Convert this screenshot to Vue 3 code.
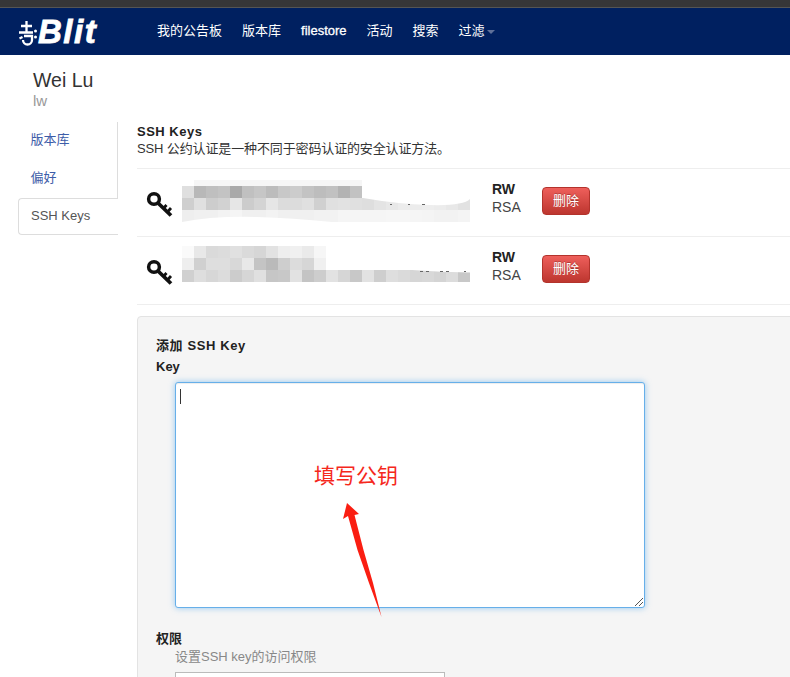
<script setup>
const links = [
  { t: '我的公告板' },
  { t: '版本库' },
  { t: 'filestore', latin: true },
  { t: '活动' },
  { t: '搜索' },
  { t: '过滤', caret: true }
]
const g = (v) => `rgb(${v},${v},${v})`
const keys = [
  {
    rows: [
      { h: 6, pad: 12, cells: [], strip: 168 },
      { h: 12, cells: [223,184,191,195,169,192,198,188,200,204,195,189,193,179,194] },
      { h: 12, cells: [207,224,205,210,230,204,212,230,220,220,224,208,224,226,224,222,228,232,236,236,238,236,232,226] },
      { h: 12, cells: [238,240,240,243,245,240,240,243,240,240,240,242,242,245,245,245,245,246,246,245,244,242,242,244] }
    ],
    cover: ['M181 18Q215 24 248 25T288 19V18Z', 'M0 42Q30 36 75 37Q110 38 150 42Z'],
    marks: 'M208 24.500h2M226 24.500h2M240 24.500h3'
  },
  {
    rows: [
      { h: 12, cells: [250,232,218,220,224,218,214,226,238,240,234,246] },
      { h: 12, cells: [238,208,222,222,216,232,196,186,206,220,214,240] },
      { h: 12, cells: [208,222,215,220,204,214,224,198,200,226,196,205,226,214,200,226,206,222,218,214,216,212,220,200] }
    ],
    cover: ['M230 24Q260 26 288 26.500V24Z'],
    marks: 'M238 25.500h3M244 25.500h3M258 25.500h3M264 25.500h3M282 25.500h2'
  }
]
</script>

<template>
  <div class="page">
    <div class="strip"></div>
    <header class="navbar">
      <a class="brand">
        <svg class="mark" width="20" height="26" viewBox="0 0 20 26" fill="none" stroke="#fff" stroke-width="2.300">
          <path d="M3 6h11M8.500 1v11M1 12.500h14" />
          <path d="M6 16h8v4a4.500 4.500 0 0 1-9 0" />
          <path d="M1.500 18.500l3-1.500" />
          <circle cx="17.500" cy="11" r="1.500" fill="#fff" stroke="none" />
          <circle cx="17.500" cy="17" r="1.500" fill="#fff" stroke="none" />
        </svg>
        <span class="blit">Blit</span>
      </a>
      <nav class="links">
        <a v-for="l in links" :key="l.t" :class="{ latin: l.latin }">{{ l.t }}<i v-if="l.caret" class="caret"></i></a>
      </nav>
    </header>

    <div class="user">
      <h2>Wei Lu</h2>
      <div class="login">lw</div>
    </div>

    <div class="body">
      <aside class="tabs">
        <a class="tab">版本库</a>
        <a class="tab">偏好</a>
        <a class="tab active">SSH Keys</a>
      </aside>

      <main class="content">
        <h4>SSH Keys</h4>
        <p class="desc">SSH 公约认证是一种不同于密码认证的安全认证方法。</p>

        <div class="keys">
          <div v-for="(k, i) in keys" :key="i" class="key-row">
            <svg class="key" width="27" height="27" viewBox="0 0 27 27" fill="none" stroke="#111">
              <ellipse cx="8" cy="8" rx="5.400" ry="5.200" stroke-width="3.500" />
              <path d="M12 12L25 24.500" stroke-width="3.800" />
              <path d="M17 18l3.500-4M21 21.500l4-4.500" stroke-width="2.800" />
            </svg>
            <div class="mosaic" :class="{ second: i === 1 }">
              <div v-for="(r, j) in k.rows" :key="j" class="m-row" :style="{ height: r.h + 'px' }">
                <span v-for="(c, n) in r.cells" :key="n" class="cell" :style="{ background: g(c) }"></span>
                <span v-if="r.strip" class="m-strip" :style="{ width: r.strip + 'px', marginLeft: r.pad + 'px' }"></span>
              </div>
              <svg class="cover" width="288" height="42" viewBox="0 0 288 42">
                <path v-for="d in k.cover" :key="d" :d="d" fill="#fff" />
                <path :d="k.marks" stroke="#666" stroke-width="1" fill="none" />
              </svg>
            </div>
            <div class="perm">
              <b>RW</b>
              <span>RSA</span>
            </div>
            <button class="del">删除</button>
          </div>
        </div>

        <form class="well" @submit.prevent>
          <div class="legend">添加 SSH Key</div>
          <label class="lbl">Key</label>
          <div class="field">
            <i class="cursor"></i>
            <span class="note">填写公钥</span>
            <svg class="arrow" width="45" height="120" viewBox="0 0 45 120">
              <polygon points="7,3 19,14 14.500,15 23.500,50 33,83 41.500,117 29,83 17.500,50 8,16 3,19" fill="#fa1e12" />
            </svg>
            <svg class="grip" width="10" height="10" viewBox="0 0 10 10" stroke="#555" stroke-width="1">
              <path d="M1 9L9 1M5 9L9 5" />
            </svg>
          </div>
          <label class="lbl perm-lbl">权限</label>
          <div class="help">设置SSH key的访问权限</div>
          <div class="select"></div>
        </form>
      </main>
    </div>
  </div>
</template>

<style scoped>
.page {
  width: 790px;
  height: 677px;
  overflow: hidden;
  background: #fff;
  color: #333;
  font-family: "Liberation Sans", "Noto Sans CJK SC", sans-serif;
  font-size: 13px;
  line-height: 18px;
}
.strip {
  height: 8px;
  background: #363638;
  border-bottom: 1px solid #555;
  box-sizing: border-box;
}
.navbar {
  height: 47px;
  background: #002060;
  display: flex;
  align-items: center;
}
.brand {
  width: 157px;
  flex: none;
  display: flex;
  align-items: center;
  padding-left: 18px;
  box-sizing: border-box;
  color: #fff;
}
.mark {
  flex: none;
  margin-top: 2px;
}
.blit {
  font-size: 33px;
  line-height: 40px;
  font-weight: 700;
  font-style: italic;
  letter-spacing: 1.500px;
  -webkit-text-stroke: 0.8px #fff;
}
.links {
  display: flex;
  gap: 20px;
  color: #fff;
  margin-top: -1px;
}
.latin {
  -webkit-text-stroke: 0.3px #fff;
}
.caret {
  display: inline-block;
  width: 0;
  height: 0;
  margin-left: 2px;
  vertical-align: middle;
  border-left: 4px solid transparent;
  border-right: 4px solid transparent;
  border-top: 4px solid #5f7099;
}
.user {
  height: 67px;
  padding: 13px 0 0 33px;
  box-sizing: border-box;
}
.user h2 {
  margin: 0;
  font-size: 19.500px;
  font-weight: 400;
  line-height: 24px;
  color: #333;
}
.login {
  font-size: 15px;
  line-height: 18px;
  color: #999;
}
.body {
  display: flex;
  align-items: flex-start;
}
.tabs {
  width: 100px;
  margin-left: 18px;
  flex: none;
  display: flex;
  flex-direction: column;
  border-right: 1px solid #ddd;
  box-sizing: border-box;
  height: 76px;
}
.tab {
  height: 38px;
  flex: none;
  line-height: 36px;
  padding-left: 12.500px;
  color: #3d5da8;
}
.tab.active {
  width: 100px;
  height: 37px;
  box-sizing: border-box;
  line-height: 33px;
  padding-left: 12px;
  color: #555;
  background: #fff;
  border: 1px solid #ddd;
  border-right: 0;
  border-radius: 4px 0 0 4px;
}
.content {
  margin-left: 19px;
  width: 700px;
  flex: none;
}
h4 {
  margin: 0;
  padding-top: 1px;
  font-size: 13px;
  line-height: 17px;
  font-weight: 700;
  letter-spacing: 0.5px;
  color: #222;
}
.desc {
  margin: 0;
  line-height: 17px;
  color: #333;
  letter-spacing: -0.13px;
}
.keys {
  margin-top: 11px;
  border-top: 1px solid #eee;
}
.key-row {
  height: 67px;
  border-bottom: 1px solid #eee;
  display: flex;
  align-items: flex-start;
}
.key {
  flex: none;
  margin: 22px 0 0 9px;
}
.mosaic {
  position: relative;
  width: 288px;
  margin: 11px 22px 0 9px;
  flex: none;
}
.mosaic.second {
  margin-top: 9px;
}
.cover {
  position: absolute;
  left: 0;
  top: 0;
  pointer-events: none;
}
.m-row {
  display: flex;
}
.cell {
  width: 12px;
  flex: none;
}
.m-strip {
  background: #f6f6f6;
}
.perm {
  display: flex;
  flex-direction: column;
  width: 50px;
  flex: none;
  margin-top: 11px;
  line-height: 18px;
  font-size: 14px;
}
.perm b {
  color: #222;
}
.perm span {
  color: #444;
}
.del {
  flex: none;
  width: 48px;
  height: 28px;
  margin-top: 18px;
  padding: 0 0 3px;
  border: 1px solid #b3332c;
  border-radius: 4px;
  background: linear-gradient(#ee5f5b, #bd362f);
  color: #fff;
  font: 13px "Liberation Sans", "Noto Sans CJK SC", sans-serif;
  text-shadow: 0 -1px 0 rgba(0, 0, 0, 0.25);
}
.well {
  margin-top: 11px;
  height: 420px;
  padding: 19px 18px 0;
  box-sizing: border-box;
  background: #f5f5f5;
  border: 1px solid #e3e3e3;
  border-radius: 4px;
}
.legend {
  font-weight: 700;
  line-height: 20px;
  letter-spacing: 0.6px;
  color: #222;
}
.lbl {
  display: block;
  font-weight: 700;
  line-height: 20px;
  color: #222;
  padding-top: 1px;
}
.field {
  position: relative;
  width: 470px;
  height: 226px;
  margin: 5px 0 0 19px;
  box-sizing: border-box;
  background: #fff;
  border: 1px solid #66afe9;
  border-radius: 3px;
  box-shadow: inset 0 1px 1px rgba(0, 0, 0, 0.075), 0 0 6px rgba(82, 168, 236, 0.6);
}
.cursor {
  position: absolute;
  left: 4px;
  top: 6px;
  width: 1px;
  height: 15px;
  background: #333;
}
.note {
  position: absolute;
  left: 138px;
  top: 78px;
  font-size: 21px;
  line-height: 30px;
  color: #f5281c;
  white-space: nowrap;
}
.arrow {
  position: absolute;
  left: 164px;
  top: 117px;
  overflow: visible;
}
.grip {
  position: absolute;
  right: 0;
  bottom: 0;
}
.perm-lbl {
  margin-top: 20px;
}
.help {
  margin: -1px 0 0 19px;
  line-height: 18px;
  color: #888;
}
.select {
  margin: 6px 0 0 19px;
  width: 270px;
  height: 30px;
  box-sizing: border-box;
  background: #fff;
  border: 1px solid #bbb;
}
</style>
